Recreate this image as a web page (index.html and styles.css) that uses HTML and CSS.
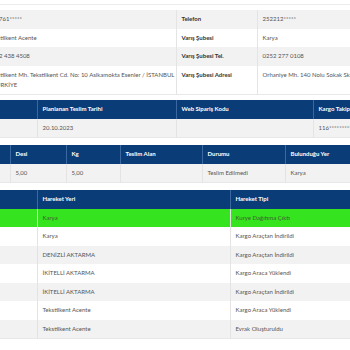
FILE: index.html
```html
<!DOCTYPE html>
<html lang="tr">
<head>
<meta charset="utf-8">
<title>Kargo Takip</title>
<link rel="stylesheet" href="styles.css">
</head>
<body>
<div class="page">
  <div class="topline"></div>

  <table class="tbl tbl-info">
    <colgroup><col class="c-103"><col class="c-193"><col class="c-81"><col class="c-193"></colgroup>
    <tbody>
      <tr><td class="lbl">Gönderici Telefon</td><td>532761*****</td><td class="lbl">Telefon</td><td>252212*****</td></tr>
      <tr><td class="lbl">Çıkış Şubesi</td><td>Tekstilkent Acente</td><td class="lbl">Varış Şubesi</td><td>Karya</td></tr>
      <tr><td class="lbl">Çıkış Şubesi Tel.</td><td>0212 438 4508</td><td class="lbl">Varış Şubesi Tel.</td><td>0252 277 0108</td></tr>
      <tr><td class="lbl">Çıkış Şubesi Adresi</td><td class="addr">Tekstilkent Mh. Tekstilkent Cd. No: 10 Aslkamokta Esenler / İSTANBUL / TÜRKİYE</td><td class="lbl">Varış Şubesi Adresi</td><td>Orhaniye Mh. 140 Nolu Sokak Sk. No:3</td></tr>
    </tbody>
  </table>

  <table class="tbl">
    <colgroup><col class="c-157"><col class="c-139"><col class="c-137"><col class="c-137"></colgroup>
    <thead><tr><th>Gönderi Tarihi</th><th>Planlanan Teslim Tarihi</th><th>Web Sipariş Kodu</th><th>Kargo Takip No</th></tr></thead>
    <tbody><tr><td>19.10.2023</td><td>20.10.2023</td><td></td><td>116******************</td></tr></tbody>
  </table>

  <table class="tbl">
    <colgroup><col class="c-130"><col class="c-56"><col class="c-54"><col class="c-82"><col class="c-83"><col class="c-165"></colgroup>
    <thead><tr><th>Adet</th><th>Desi</th><th>Kg</th><th>Teslim Alan</th><th>Durumu</th><th>Bulunduğu Yer</th></tr></thead>
    <tbody><tr><td>1</td><td>5,00</td><td>5,00</td><td></td><td>Teslim Edilmedi</td><td>Karya</td></tr></tbody>
  </table>

  <table class="tbl tbl-moves">
    <colgroup><col class="c-157"><col class="c-193"><col class="c-220"></colgroup>
    <thead><tr><th>İşlem Tarihi</th><th>Hareket Yeri</th><th>Hareket Tipi</th></tr></thead>
    <tbody>
      <tr class="row-active"><td>20.10.2023 09:12</td><td>Karya</td><td>Kurye Dağıtıma Çıktı</td></tr>
      <tr><td>20.10.2023 07:40</td><td>Karya</td><td>Kargo Araçtan İndirildi</td></tr>
      <tr><td>20.10.2023 02:15</td><td>DENİZLİ AKTARMA</td><td>Kargo Araçtan İndirildi</td></tr>
      <tr><td>19.10.2023 21:03</td><td>İKİTELLİ AKTARMA</td><td>Kargo Araca Yüklendi</td></tr>
      <tr><td>19.10.2023 19:48</td><td>İKİTELLİ AKTARMA</td><td>Kargo Araçtan İndirildi</td></tr>
      <tr><td>19.10.2023 17:30</td><td>Tekstilkent Acente</td><td>Kargo Araca Yüklendi</td></tr>
      <tr><td>19.10.2023 15:22</td><td>Tekstilkent Acente</td><td>Evrak Oluşturuldu</td></tr>
    </tbody>
  </table>
</div>
</body>
</html>
```
FILE: styles.css
```css
html, body {
  margin: 0;
  padding: 0;
  background: #ffffff;
  overflow: hidden;
}

body {
  font-family: Lato, "Noto Sans", sans-serif;
}

.page {
  margin-left: -120px;
  width: 570px;
}

.topline {
  height: 4px;
  border-bottom: 1px solid #ececec;
  margin-bottom: 5px;
}

.tbl {
  width: 570px;
  border-collapse: collapse;
  table-layout: fixed;
  font-size: 6px;
  color: #555555;
  margin-bottom: 7px;
  border-bottom: 1px solid #e8e8e8;
}

.tbl-info {
  margin-bottom: 5px;
}

.tbl td,
.tbl th {
  padding: 4.25px 5px;
  line-height: 10px;
  text-align: left;
  vertical-align: top;
  border-left: 1px solid #e4e4e4;
  white-space: normal;
  overflow: hidden;
}

.tbl td.addr {
  padding-right: 0;
}

.tbl th {
  background: #0a3c78;
  color: #ffffff;
  font-weight: 700;
  border-left-color: #3b68a0;
}

.tbl td:first-child,
.tbl th:first-child {
  border-left: none;
}

.tbl tbody tr:nth-child(odd) td {
  background: #f2f2f2;
}

.tbl .lbl {
  font-weight: 700;
  color: #333333;
}

.tbl tbody tr.row-active td {
  background: #36e31f;
  color: #3f5f33;
}

.c-54 { width: 54px; }
.c-56 { width: 56px; }
.c-81 { width: 81px; }
.c-82 { width: 82px; }
.c-83 { width: 83px; }
.c-103 { width: 103px; }
.c-130 { width: 130px; }
.c-137 { width: 137px; }
.c-139 { width: 139px; }
.c-157 { width: 157px; }
.c-165 { width: 165px; }
.c-193 { width: 193px; }
.c-220 { width: 220px; }
```
